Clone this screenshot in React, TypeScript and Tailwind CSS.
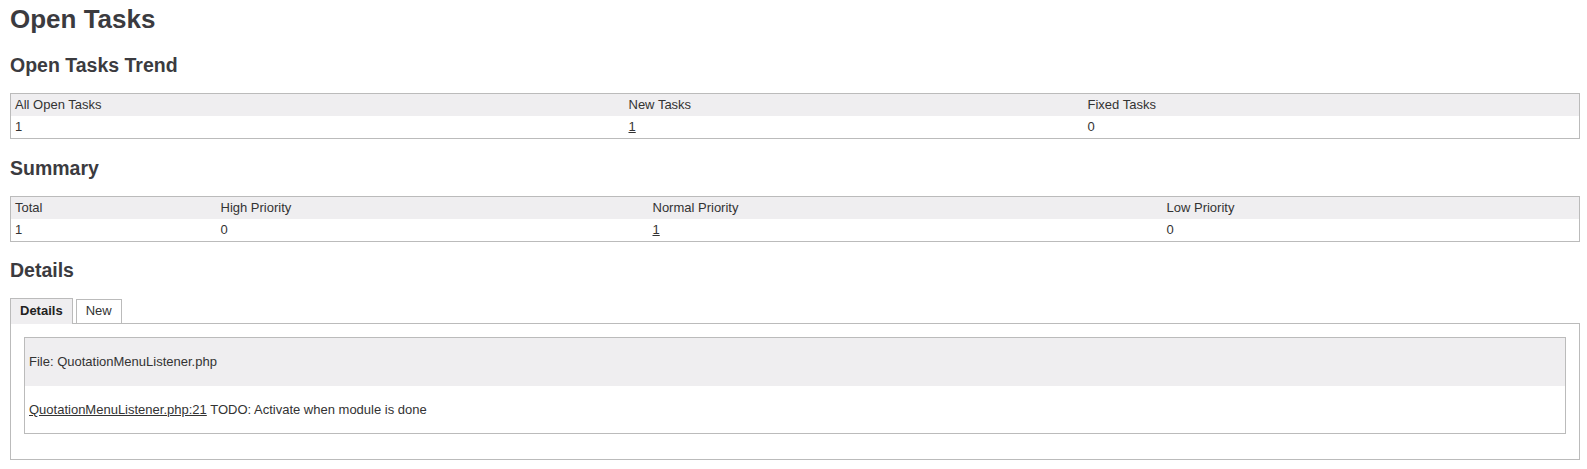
export default function App() {
  const trendHead = ["All Open Tasks", "New Tasks", "Fixed Tasks"];
  const summaryHead = ["Total", "High Priority", "Normal Priority", "Low Priority"];

  return (
    <div className="min-h-screen bg-white pl-[10px] pr-[7px] pt-[3px] text-[13px] text-[#333] font-['Liberation_Sans',Arial,sans-serif]">
      <h1 className="text-[26px] leading-[32px] font-bold text-[#3b3b3f]">Open Tasks</h1>

      {/* trend */}
      <h2 className="mt-[18px] text-[19.5px] leading-[24px] font-bold text-[#3b3b3f]">Open Tasks Trend</h2>
      <table className="mt-[16px] w-full table-fixed border-collapse border border-[#bbb]">
        <colgroup>
          <col className="w-[614px]" />
          <col className="w-[459px]" />
          <col />
        </colgroup>
        <thead>
          <tr className="bg-[#efeef0]">
            {trendHead.map((h) => (
              <th key={h} className="px-[4px] py-[3px] text-left font-normal leading-[16px]">
                {h}
              </th>
            ))}
          </tr>
        </thead>
        <tbody>
          <tr>
            <td className="px-[4px] py-[3px] leading-[16px]">1</td>
            <td className="px-[4px] py-[3px] leading-[16px]">
              <a href="#" className="underline text-[#333]">1</a>
            </td>
            <td className="px-[4px] py-[3px] leading-[16px]">0</td>
          </tr>
        </tbody>
      </table>

      {/* summary */}
      <h2 className="mt-[17px] text-[19.5px] leading-[24px] font-bold text-[#3b3b3f]">Summary</h2>
      <table className="mt-[16px] w-full table-fixed border-collapse border border-[#bbb]">
        <colgroup>
          <col className="w-[206px]" />
          <col className="w-[432px]" />
          <col className="w-[514px]" />
          <col />
        </colgroup>
        <thead>
          <tr className="bg-[#efeef0]">
            {summaryHead.map((h) => (
              <th key={h} className="px-[4px] py-[3px] text-left font-normal leading-[16px]">
                {h}
              </th>
            ))}
          </tr>
        </thead>
        <tbody>
          <tr>
            <td className="px-[4px] py-[3px] leading-[16px]">1</td>
            <td className="px-[4px] py-[3px] leading-[16px]">0</td>
            <td className="px-[4px] py-[3px] leading-[16px]">
              <a href="#" className="underline text-[#333]">1</a>
            </td>
            <td className="px-[4px] py-[3px] leading-[16px]">0</td>
          </tr>
        </tbody>
      </table>

      {/* details */}
      <h2 className="mt-[16px] text-[19.5px] leading-[24px] font-bold text-[#3b3b3f]">Details</h2>
      <div className="mt-[16px]">
        <div className="flex items-end gap-[3px]">
          <div className="relative z-10 -mb-px h-[26px] border border-b-0 border-[#bbb] bg-[#efeef0] px-[9px] pt-[4px] font-bold leading-[16px] text-[#222]">
            Details
          </div>
          <div className="h-[24px] border border-b-0 border-[#bbb] bg-white px-[9px] pt-[3px] leading-[16px]">
            New
          </div>
        </div>
        <div className="border border-[#bbb] px-[13px] pb-[25px] pt-[13px]">
          <div className="border border-[#bbb]">
            <div className="bg-[#efeef0] px-[4px] py-[16px] leading-[16px]">File: QuotationMenuListener.php</div>
            <div className="px-[4px] py-[16px] leading-[15px]">
              <a href="#" className="underline text-[#333]">QuotationMenuListener.php:21</a> TODO: Activate when module is done
            </div>
          </div>
        </div>
      </div>
    </div>
  );
}
